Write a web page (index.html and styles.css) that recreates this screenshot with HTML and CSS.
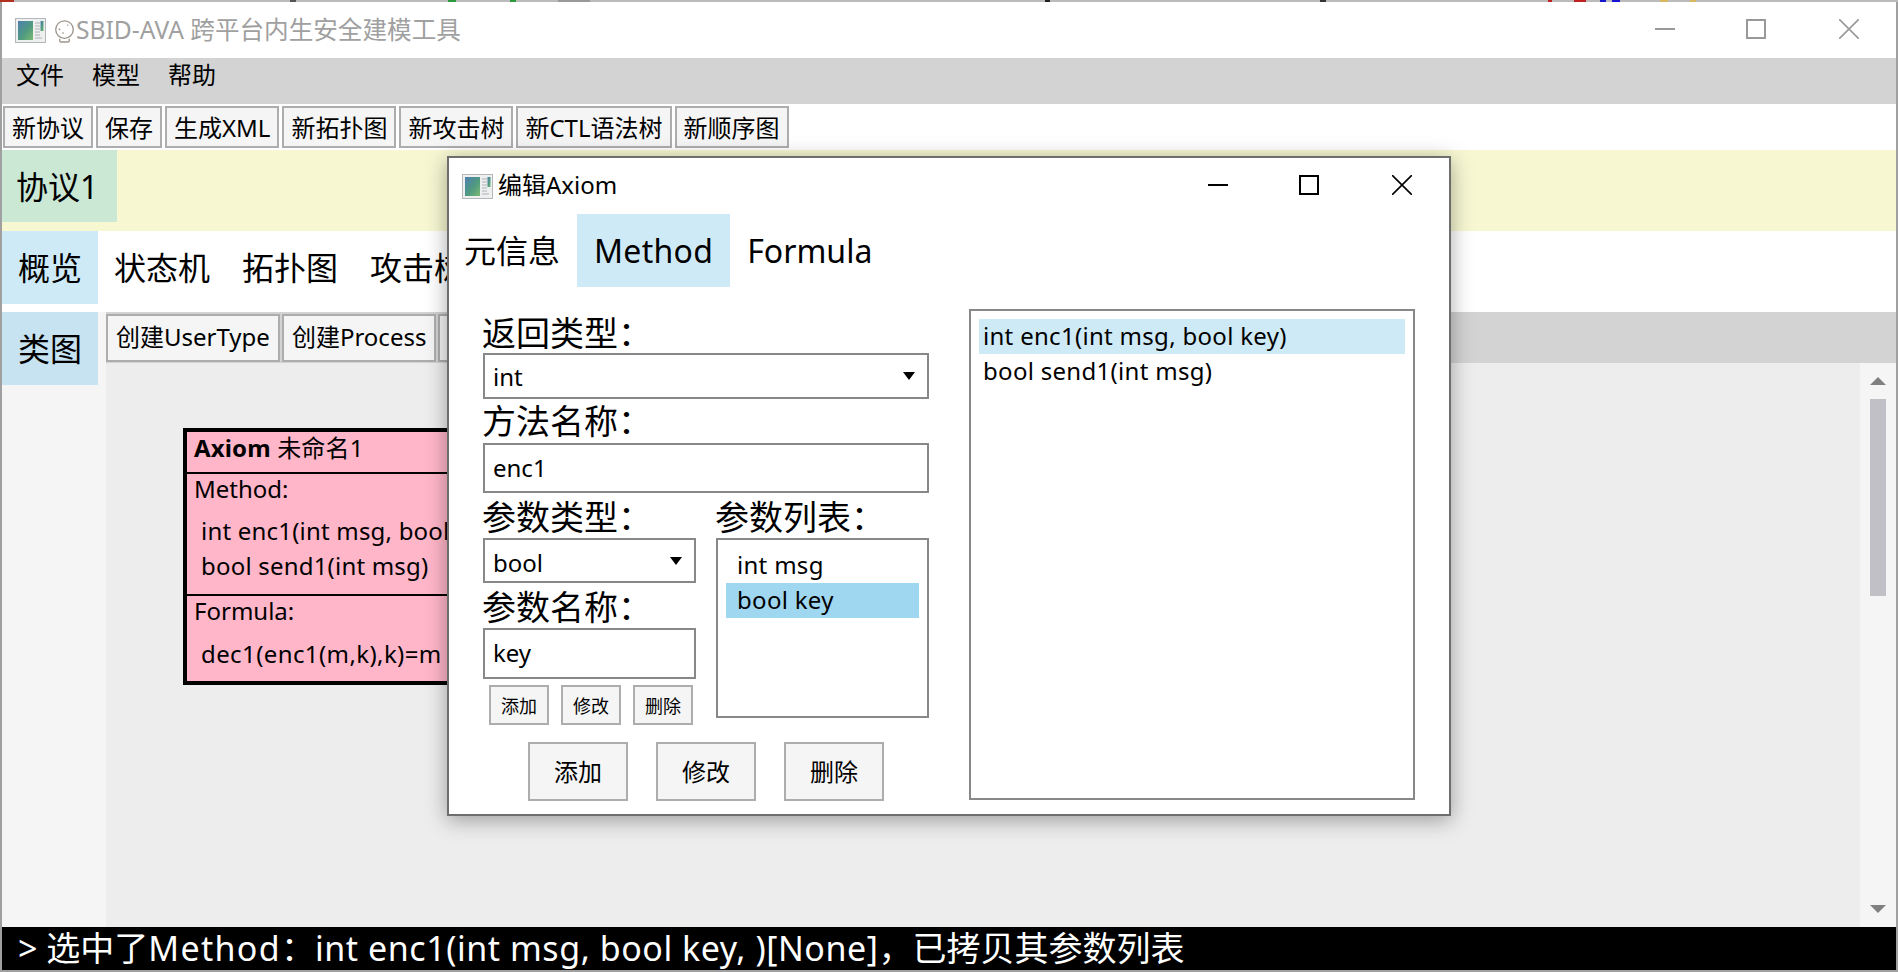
FILE: index.html
```html
<!DOCTYPE html>
<html>
<head>
    <meta charset="utf-8">
    <title>SBID-AVA</title>
    <link rel="stylesheet" href="styles.css">
</head>
<body>
    <svg class="defs">
        <defs>
            <linearGradient id="panel" x1="0" y1="0" x2="1" y2="1">
                <stop offset="0" stop-color="#4f7fb0"/>
                <stop offset="0.55" stop-color="#4f9a80"/>
                <stop offset="1" stop-color="#7cba72"/>
            </linearGradient>
            <symbol id="app-icon" viewBox="0 0 31 25">
                <rect x="0.5" y="0.5" width="30" height="24" fill="#eef0f0" stroke="#b4b8ba"/>
                <rect x="3" y="3" width="15" height="19" fill="url(#panel)"/>
                <path d="M20 5h5M20 8h5M20 11h5M20 14h5M20 17h5M20 20h7" stroke="#c2c6c6" stroke-width="1.4"/>
                <rect x="25.5" y="3" width="3" height="10" fill="url(#panel)"/>
            </symbol>
        </defs>
    </svg>

    <div class="window">
        <div class="desktop-edge"></div>

        <div class="titlebar">
            <svg class="app-icon"><use href="#app-icon"/></svg>
            <svg class="ball-icon" viewBox="0 0 22 24" fill="none" stroke="#9c968c" stroke-width="1.4">
                <circle cx="11" cy="10" r="9.2"/>
                <path d="M6 19.5v2.2q0 1.3 1.5 1.3h7q1.5 0 1.5-1.3v-2.2"/>
                <path d="M5 9l1.5 1.5M9 13l1 1.2M14 5l1 0.6"/>
            </svg>
            <span class="title-text">SBID-AVA 跨平台内生安全建模工具</span>
            <div class="win-controls">
                <svg viewBox="0 0 20 20"><path d="M0 10h20" stroke-width="2"/></svg>
                <svg viewBox="0 0 20 20"><rect x="1" y="1" width="18" height="18" stroke-width="2"/></svg>
                <svg viewBox="0 0 20 20"><path d="M0 0l20 20M20 0L0 20" stroke-width="1.6"/></svg>
            </div>
        </div>

        <div class="menubar">
            <span>文件</span>
            <span>模型</span>
            <span>帮助</span>
        </div>

        <div class="toolbar">
            <button class="tool-btn">新协议</button>
            <button class="tool-btn">保存</button>
            <button class="tool-btn">生成XML</button>
            <button class="tool-btn">新拓扑图</button>
            <button class="tool-btn">新攻击树</button>
            <button class="tool-btn">新CTL语法树</button>
            <button class="tool-btn">新顺序图</button>
        </div>

        <div class="protocol-tabs">
            <div class="protocol-tab">协议1</div>
        </div>

        <div class="view-tabs">
            <div class="view-tab active">概览</div>
            <div class="view-tab">状态机</div>
            <div class="view-tab">拓扑图</div>
            <div class="view-tab">攻击树</div>
        </div>

        <div class="workspace">
            <div class="side-tabs">
                <div class="side-tab">类图</div>
            </div>
            <div class="editor">
                <div class="sub-toolbar">
                    <button class="sub-btn">创建UserType</button>
                    <button class="sub-btn">创建Process</button>
                    <button class="sub-btn">创建Axiom</button>
                </div>
                <div class="canvas-wrap">
                    <div class="canvas">
                        <div class="axiom-card">
                            <div class="card-head"><b>Axiom</b> 未命名1</div>
                            <div class="card-section method-section">
                                <div class="card-label">Method:</div>
                                <div class="card-items">
                                    <div>int enc1(int msg, bool key)</div>
                                    <div>bool send1(int msg)</div>
                                </div>
                            </div>
                            <div class="card-section formula-section">
                                <div class="card-label">Formula:</div>
                                <div class="card-items formula-items">
                                    <div>dec1(enc1(m,k),k)=m</div>
                                </div>
                            </div>
                        </div>
                    </div>
                    <div class="scrollbar">
                        <span class="arrow-up"></span>
                        <div class="scroll-track"><div class="scroll-thumb"></div></div>
                        <span class="arrow-down"></span>
                    </div>
                </div>
            </div>
        </div>

        <div class="statusbar">&gt; 选中了<span class="status-name">Method</span>：<span class="status-sig">int enc1(int msg, bool key, )[None]</span>，已拷贝其参数列表</div>
    </div>

    <div class="dialog">
        <div class="dialog-title">
            <svg class="app-icon"><use href="#app-icon"/></svg>
            <span class="dialog-title-text">编辑Axiom</span>
            <div class="dialog-controls">
                <svg viewBox="0 0 20 20"><path d="M0 10h20" stroke-width="2"/></svg>
                <svg viewBox="0 0 20 20"><rect x="1" y="1" width="18" height="18" stroke-width="2"/></svg>
                <svg viewBox="0 0 20 20"><path d="M0 0l20 20M20 0L0 20" stroke-width="1.6"/></svg>
            </div>
        </div>

        <div class="dialog-tabs">
            <div class="dialog-tab">元信息</div>
            <div class="dialog-tab active">Method</div>
            <div class="dialog-tab">Formula</div>
        </div>

        <div class="dialog-body">
            <div class="method-form">
                <div class="field-label">返回类型：</div>
                <div class="field select-field">int<span class="caret"></span></div>
                <div class="field-label">方法名称：</div>
                <div class="field input-field">enc1</div>

                <div class="param-grid">
                    <div class="param-left">
                        <div class="field-label">参数类型：</div>
                        <div class="field select-field param-select">bool<span class="caret"></span></div>
                        <div class="field-label">参数名称：</div>
                        <div class="field input-field key-field">key</div>
                        <div class="small-actions">
                            <button class="small-btn">添加</button>
                            <button class="small-btn">修改</button>
                            <button class="small-btn">删除</button>
                        </div>
                    </div>
                    <div class="param-right">
                        <div class="field-label">参数列表：</div>
                        <div class="param-list">
                            <div class="list-row">int msg</div>
                            <div class="list-row selected">bool key</div>
                        </div>
                    </div>
                </div>

                <div class="form-actions">
                    <button class="action-btn">添加</button>
                    <button class="action-btn">修改</button>
                    <button class="action-btn">删除</button>
                </div>
            </div>

            <div class="method-list">
                <div class="method-row selected">int enc1(int msg, bool key)</div>
                <div class="method-row">bool send1(int msg)</div>
            </div>
        </div>
    </div>
</body>
</html>
```

FILE: styles.css
```css
* {
    box-sizing: border-box;
}

html, body {
    margin: 0;
    height: 972px;
    overflow: hidden;
}

body {
    font-family: "Noto Sans", "Noto Sans CJK SC", sans-serif;
    font-size: 24px;
    color: #000;
    background: #fff;
}

button {
    font-family: inherit;
    color: #000;
    cursor: pointer;
}

.defs {
    position: absolute;
    width: 0;
    height: 0;
}

.window {
    display: flex;
    flex-direction: column;
    height: 972px;
    border-left: 2px solid #a0a0a0;
    border-right: 2px solid #a0a0a0;
    border-bottom: 2px solid #a0a0a0;
}

.desktop-edge {
    height: 2px;
    margin: 0 -2px;
    background:
        linear-gradient(90deg,
            #b03020 0 14px, #bbb 14px 290px, #555 290px 296px, #bbb 296px 448px,
            #2a9a3a 448px 456px, #bbb 456px 510px, #2a9a3a 510px 516px, #bbb 516px 558px,
            #999 558px 590px, #bbb 590px 1045px, #222 1045px 1050px, #bbb 1050px 1320px,
            #333 1320px 1326px, #bbb 1326px 1548px, #c02020 1548px 1552px, #bbb 1552px 1574px,
            #c02020 1574px 1586px, #bbb 1586px 1600px, #1515d0 1600px 1606px, #bbb 1606px 1612px,
            #1515d0 1612px 1620px, #bbb 1620px 1660px, #d8b860 1660px 1668px, #bbb 1668px 1690px,
            #d8b860 1690px 1696px, #bbb 1696px);
}

.titlebar {
    display: flex;
    align-items: center;
    height: 56px;
    padding-left: 13px;
    color: #a0a0a0;
}

.app-icon {
    width: 31px;
    height: 25px;
    flex: none;
}

.ball-icon {
    width: 21px;
    height: 23px;
    margin-left: 8px;
    margin-top: 2px;
}

.title-text {
    margin-left: 1px;
    font-size: 24.6px;
    line-height: 56px;
}

.win-controls {
    display: flex;
    gap: 71px;
    margin-left: auto;
    margin-bottom: 2px;
    padding-right: 37px;
}

.win-controls svg {
    width: 20px;
    height: 20px;
    fill: none;
    stroke: #999;
}

.win-controls svg:last-child {
    margin-left: 2px;
}

.menubar {
    display: flex;
    align-items: center;
    gap: 28px;
    height: 46px;
    padding-left: 14px;
    padding-bottom: 16px;
    background: #d3d3d3;
}

.toolbar {
    display: flex;
    align-items: center;
    gap: 3px;
    height: 46px;
    padding-left: 1px;
    background: #fff;
}

.tool-btn {
    height: 42px;
    padding: 2px 7px 0;
    font-size: 24px;
    line-height: 36px;
    background: #f5f5f5;
    border: 2px solid #adadad;
}

.protocol-tabs {
    height: 81px;
    background: #f7f8d2;
}

.protocol-tab {
    width: 115px;
    height: 72px;
    padding-left: 14px;
    font-size: 32px;
    line-height: 74px;
    background: #cbe8d5;
}

.view-tabs {
    display: flex;
    height: 81px;
    background: #fff;
}

.view-tab {
    height: 73px;
    padding: 0 16px;
    font-size: 32px;
    line-height: 73px;
}

.view-tab.active {
    background: #cfeaf7;
}

.workspace {
    display: flex;
    flex: 1;
    min-height: 0;
}

.side-tabs {
    width: 104px;
    flex: none;
    background: #f5f5f5;
}

.side-tab {
    width: 96px;
    height: 73px;
    padding-left: 16px;
    font-size: 32px;
    line-height: 73px;
    background: #c7e3f1;
}

.editor {
    display: flex;
    flex-direction: column;
    flex: 1;
    min-width: 0;
}

.sub-toolbar {
    display: flex;
    align-items: center;
    gap: 2px;
    height: 51px;
    background: #d3d3d3;
}

.sub-btn {
    height: 48px;
    padding: 0 8px 2px;
    font-size: 24px;
    line-height: 40px;
    background: #f5f5f5;
    border: 2px solid #adadad;
}

.canvas-wrap {
    display: flex;
    flex: 1;
    min-height: 0;
}

.canvas {
    position: relative;
    flex: 1;
    background: #ededed;
}

.axiom-card {
    position: absolute;
    left: 77px;
    top: 65px;
    width: 400px;
    height: 257px;
    background: #ffb6c9;
    border: 4px solid #000;
}

.card-head {
    height: 40px;
    padding-left: 7px;
    line-height: 32px;
    letter-spacing: 0.15px;
}

.card-section {
    border-top: 2px solid #000;
    padding-left: 7px;
}

.method-section {
    height: 122px;
}

.card-label {
    height: 30px;
    line-height: 30px;
}

.card-items {
    margin-top: 9px;
    padding-left: 7px;
    line-height: 35px;
    letter-spacing: 0.2px;
}

.formula-items {
    margin-top: 10px;
    letter-spacing: 0.4px;
}

.scrollbar {
    position: relative;
    display: flex;
    flex-direction: column;
    align-items: center;
    width: 36px;
    padding: 14px 0;
    background: #f5f5f5;
}

.arrow-up {
    width: 0;
    height: 0;
    border-left: 8px solid transparent;
    border-right: 8px solid transparent;
    border-bottom: 8px solid #808080;
}

.arrow-down {
    width: 0;
    height: 0;
    border-left: 8px solid transparent;
    border-right: 8px solid transparent;
    border-top: 8px solid #808080;
}

.scroll-track {
    flex: 1;
    width: 16px;
    margin: 14px 0;
}

.scroll-thumb {
    width: 16px;
    height: 197px;
    background: #c0c0c6;
}

.statusbar {
    height: 43px;
    padding-left: 16px;
    font-size: 34px;
    line-height: 43px;
    color: #fff;
    background: #000;
    white-space: nowrap;
}

.status-name {
    letter-spacing: 1.3px;
}

.status-sig {
    letter-spacing: 0.55px;
}

/* edit window */
.dialog {
    position: absolute;
    left: 447px;
    top: 156px;
    width: 1004px;
    height: 660px;
    background: #fff;
    border: 2px solid #6e6e6e;
    box-shadow: 0 4px 20px rgba(0, 0, 0, 0.35);
}

.dialog-title {
    display: flex;
    align-items: center;
    height: 56px;
    padding-left: 13px;
}

.dialog-title-text {
    margin-left: 5px;
    margin-bottom: 5px;
}

.dialog-controls {
    display: flex;
    gap: 71px;
    margin-left: auto;
    margin-bottom: 2px;
    padding-right: 37px;
}

.dialog-controls svg {
    width: 20px;
    height: 20px;
    fill: none;
    stroke: #000;
}

.dialog-controls svg:last-child {
    margin-left: 2px;
}

.dialog-tabs {
    display: flex;
    height: 73px;
}

.dialog-tab {
    padding: 0 17px;
    font-size: 32px;
    line-height: 73px;
}

.dialog-tab:first-child {
    padding: 0 17px 0 15px;
}

.dialog-tab.active {
    padding: 0 17px;
    letter-spacing: 0.3px;
    background: #cfeaf7;
}

.dialog-body {
    display: flex;
    gap: 40px;
    padding: 22px 0 0 34px;
}

.method-form {
    width: 446px;
}

.field-label {
    height: 44px;
    margin-left: -1px;
    font-size: 34px;
    line-height: 45px;
    white-space: nowrap;
}

.method-form > .field-label:first-child {
    line-height: 48px;
}

.field {
    position: relative;
    padding-left: 8px;
    border: 2px solid #888;
    background: #fff;
}

.select-field {
    height: 46px;
    line-height: 44px;
}

.param-select {
    height: 45px;
    line-height: 45px;
}

.input-field {
    height: 50px;
    line-height: 46px;
}

.key-field {
    height: 51px;
    line-height: 45px;
}

.caret {
    position: absolute;
    right: 12px;
    top: 17px;
    width: 0;
    height: 0;
    border-left: 6.5px solid transparent;
    border-right: 6.5px solid transparent;
    border-top: 8px solid #000;
}

.param-grid {
    display: grid;
    grid-template-columns: 213px 213px;
    gap: 20px;
}

.param-left .field-label,
.param-right .field-label {
    height: 45px;
    line-height: 48px;
}

.small-actions {
    display: flex;
    gap: 12px;
    padding: 6px 0 0 6px;
}

.small-btn {
    width: 60px;
    height: 40px;
    padding: 0;
    font-size: 18px;
    background: #f5f5f5;
    border: 2px solid #adadad;
}

.param-list {
    height: 180px;
    padding: 8px;
    border: 2px solid #888;
}

.list-row {
    height: 35px;
    padding-left: 11px;
    line-height: 33px;
    letter-spacing: 0.3px;
}

.list-row.selected {
    background: #9fd6f0;
}

.form-actions {
    display: flex;
    justify-content: center;
    gap: 28px;
    margin-top: 17px;
}

.action-btn {
    width: 100px;
    height: 59px;
    padding: 0 0 2px;
    font-size: 24px;
    background: #f5f5f5;
    border: 2px solid #adadad;
}

.method-list {
    width: 446px;
    height: 491px;
    padding: 8px;
    border: 2px solid #888;
}

.method-row {
    height: 35px;
    padding-left: 4px;
    line-height: 33px;
    letter-spacing: 0.3px;
}

.method-row.selected {
    background: #cfeaf7;
}
```
